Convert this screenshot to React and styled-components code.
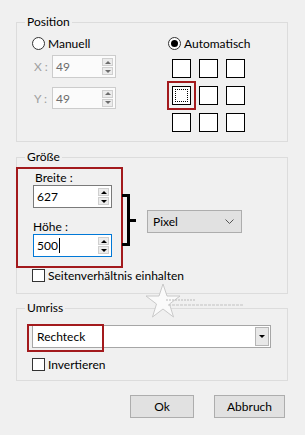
import React from 'react';
import styled, { createGlobalStyle } from 'styled-components';

const GlobalStyle = createGlobalStyle`
  body {
    margin: 0;
    background: #f0f0f0;
    font-family: 'Segoe UI', Lato, 'Noto Sans', sans-serif;
    font-size: 12px;
    color: #000;
  }
`;

const Page = styled.div`
  position: relative;
  width: 305px;
  height: 435px;
  box-sizing: border-box;
  padding: 14px 0 0 16px;
  background: #f0f0f0;
`;

const Group = styled.fieldset`
  margin: ${p => p.$mt || 0}px 0 0;
  padding: 0;
  width: 272px;
  min-width: 0;
  box-sizing: border-box;
  border: 1px solid #dcdcdc;
`;

const Legend = styled.legend`
  margin-left: 8px;
  padding: 0 2px;
  font-size: 12px;
  line-height: 16px;
`;

const PositionBody = styled.div`
  display: grid;
  grid-template-columns: 136px 1fr;
  padding: 7px 0 9px 15px;
`;

const Column = styled.div`
  display: flex;
  flex-direction: column;
`;

const OptionRow = styled.label`
  display: flex;
  align-items: center;
  gap: 3px;
  height: 13px;
  line-height: 13px;
  margin-top: ${p => p.$mt || 0}px;
  margin-left: ${p => p.$ml || 0}px;
`;

const Radio = styled.span`
  width: 13px;
  height: 13px;
  box-sizing: border-box;
  border: 1px solid #333;
  border-radius: 50%;
  background: #fff;
  display: flex;
  align-items: center;
  justify-content: center;
  &::after {
    content: '';
    display: ${p => (p.$checked ? 'block' : 'none')};
    width: 7px;
    height: 7px;
    border-radius: 50%;
    background: #000;
  }
`;

const Check = styled.span`
  width: 13px;
  height: 13px;
  box-sizing: border-box;
  border: 1px solid #333;
  background: #fff;
`;

const SpinRow = styled.div`
  display: flex;
  align-items: center;
  margin-top: ${p => p.$mt || 0}px;
`;

const AxisLabel = styled.span`
  width: 20px;
  padding-left: 2px;
  box-sizing: border-box;
  color: #a0a0a0;
`;

const Spin = styled.div`
  display: flex;
  align-items: center;
  width: ${p => p.$w}px;
  height: ${p => p.$h}px;
  box-sizing: border-box;
  border: 1px solid ${p => p.$border};
  background: ${p => (p.$disabled ? '#fbfbfb' : '#fff')};
  padding: 0 2px 0 3px;
`;

const SpinValue = styled.span`
  flex: 1;
  display: flex;
  align-items: center;
  color: ${p => (p.$disabled ? '#6d6d6d' : '#000')};
`;

const Caret = styled.span`
  width: 1px;
  height: 15px;
  background: #000;
  margin-left: 1px;
`;

const SpinButtons = styled.div`
  display: flex;
  flex-direction: column;
  gap: 1px;
`;

const SpinButton = styled.span`
  width: 11px;
  height: 8px;
  box-sizing: border-box;
  border: 1px solid #cfcfcf;
  background: #ececec;
  display: flex;
  align-items: center;
  justify-content: center;
  &::after {
    content: '';
    border-left: 3px solid transparent;
    border-right: 3px solid transparent;
    ${p =>
      p.$up
        ? `border-bottom: 3px solid ${p.$disabled ? '#6d6d6d' : '#000'};`
        : `border-top: 3px solid ${p.$disabled ? '#6d6d6d' : '#000'};`}
  }
`;

const Anchors = styled.div`
  display: grid;
  grid-template-columns: repeat(3, 19px);
  grid-auto-rows: 19px;
  gap: 8px;
  margin: 9px 0 0 4px;
`;

const Anchor = styled.span`
  box-sizing: border-box;
  border: 1px solid #000;
  background: #fff;
  outline: ${p => (p.$marked ? '2px solid #a31a1d' : 'none')};
  outline-offset: 3px;
  padding: 2px;
  &::after {
    content: '';
    display: ${p => (p.$marked ? 'block' : 'none')};
    width: 100%;
    height: 100%;
    box-sizing: border-box;
    border: 1px dotted #000;
  }
`;

const SizeBody = styled.div`
  padding: 2px 0 11px 0;
`;

const SizeRow = styled.div`
  display: flex;
  align-items: flex-start;
  margin-left: -1px;
`;

const RedBox = styled.div`
  width: 107px;
  height: 101px;
  box-sizing: border-box;
  border: 2px solid #a31a1d;
  padding: 1px 0 0 15px;
`;

const FieldLabel = styled.div`
  line-height: 15px;
  height: 15px;
  margin-top: ${p => p.$mt || 0}px;
  padding-left: ${p => p.$pl || 0}px;
`;

const Bracket = styled.div`
  display: flex;
  align-items: center;
  margin: 27px 0 0 -1px;
`;

const BracketArms = styled.div`
  width: 8px;
  height: 52px;
  box-sizing: border-box;
  border: 3px solid #000;
  border-left: none;
`;

const BracketTick = styled.div`
  width: 6px;
  height: 3px;
  background: #000;
`;

const Select = styled.div`
  display: flex;
  align-items: center;
  justify-content: space-between;
  width: 95px;
  height: 23px;
  box-sizing: border-box;
  margin: 43px 0 0 11px;
  padding: 0 7px 0 5px;
  background: #e1e1e1;
  border: 1px solid #adadad;
`;

const OptionText = styled.span`
  line-height: 13px;
`;

const OutlineBody = styled.div`
  padding: 9px 0 9px 15px;
`;

const Combo = styled.div`
  position: relative;
  display: flex;
  align-items: center;
  justify-content: space-between;
  width: 239px;
  height: 23px;
  box-sizing: border-box;
  border: 1px solid #a6a6a6;
  background: #fff;
  padding: 0 1px 0 4px;
`;

const ComboButton = styled.span`
  width: 14px;
  height: 19px;
  box-sizing: border-box;
  border: 1px solid #b5b5b5;
  background: #e8e8e8;
  display: flex;
  align-items: center;
  justify-content: center;
  &::after {
    content: '';
    border-left: 3px solid transparent;
    border-right: 3px solid transparent;
    border-top: 3px solid #000;
  }
`;

const Highlight = styled.span`
  position: absolute;
  left: -6px;
  top: -2px;
  width: 77px;
  height: 28px;
  box-sizing: border-box;
  border: 2px solid #a31a1d;
`;

const Actions = styled.div`
  display: flex;
  justify-content: flex-end;
  gap: 20px;
  width: 272px;
  box-sizing: border-box;
  padding-right: 3px;
  margin-top: 14px;
`;

const Button = styled.button`
  width: ${p => p.$w}px;
  height: 23px;
  padding: 0;
  font: inherit;
  color: #000;
  background: #e1e1e1;
  border: 1px solid #adadad;
`;

const Watermark = styled.svg`
  position: absolute;
  left: 146px;
  top: 283px;
  pointer-events: none;
`;

const SpinBox = ({ value, w, h, border, disabled, caret }) => (
  <Spin $w={w} $h={h} $border={border} $disabled={disabled}>
    <SpinValue $disabled={disabled}>
      {value}
      {caret && <Caret />}
    </SpinValue>
    <SpinButtons>
      <SpinButton $up $disabled={disabled} />
      <SpinButton $disabled={disabled} />
    </SpinButtons>
  </Spin>
);

export default function App() {
  return (
    <Page>
      <GlobalStyle />
      <Group>
        <Legend>Position</Legend>
        <PositionBody>
          <Column>
            <OptionRow>
              <Radio />
              <OptionText>Manuell</OptionText>
            </OptionRow>
            <SpinRow $mt={5}>
              <AxisLabel>X :</AxisLabel>
              <SpinBox value="49" w={64} h={23} border="#cccccc" disabled />
            </SpinRow>
            <SpinRow $mt={9}>
              <AxisLabel>Y :</AxisLabel>
              <SpinBox value="49" w={64} h={22} border="#cccccc" disabled />
            </SpinRow>
          </Column>
          <Column>
            <OptionRow>
              <Radio $checked />
              <OptionText>Automatisch</OptionText>
            </OptionRow>
            <Anchors>
              {Array.from({ length: 9 }, (_, i) => (
                <Anchor key={i} $marked={i === 3} />
              ))}
            </Anchors>
          </Column>
        </PositionBody>
      </Group>

      <Group $mt={7}>
        <Legend>Größe</Legend>
        <SizeBody>
          <SizeRow>
            <RedBox>
              <FieldLabel $pl={2}>Breite :</FieldLabel>
              <SpinBox value="627" w={79} h={23} border="#7a7a7a" />
              <FieldLabel $mt={11}>Höhe :</FieldLabel>
              <SpinBox value="500" w={79} h={23} border="#0078d7" caret />
            </RedBox>
            <Bracket>
              <BracketArms />
              <BracketTick />
            </Bracket>
            <Select>
              <span>Pixel</span>
              <svg width="9" height="5" viewBox="0 0 9 5">
                <path d="M0.5 0.5 L4.5 4.5 L8.5 0.5" fill="none" stroke="#555" strokeWidth="1" />
              </svg>
            </Select>
          </SizeRow>
          <OptionRow $mt={1} $ml={15}>
            <Check />
            <OptionText>Seitenverhältnis einhalten</OptionText>
          </OptionRow>
        </SizeBody>
      </Group>

      <Group $mt={6}>
        <Legend>Umriss</Legend>
        <OutlineBody>
          <Combo>
            <span>Rechteck</span>
            <ComboButton />
            <Highlight />
          </Combo>
          <OptionRow $mt={10}>
            <Check />
            <OptionText>Invertieren</OptionText>
          </OptionRow>
        </OutlineBody>
      </Group>

      <Actions>
        <Button $w={64}>Ok</Button>
        <Button $w={71}>Abbruch</Button>
      </Actions>

      <Watermark width="100" height="42" viewBox="0 0 100 42">
        <polygon
          points="17,1 21,13 34,13 23.5,21 27.5,34 17,26 6.5,34 10.5,21 0,13 13,13"
          fill="#fafafa"
          stroke="#c4c4c4"
          strokeWidth="0.9"
        />
        <line x1="20" y1="17" x2="50" y2="17" stroke="#bababa" strokeWidth="1" strokeDasharray="2 1" />
        <line x1="22" y1="22" x2="98" y2="22" stroke="#c2c2c2" strokeWidth="1" strokeDasharray="3 1" />
      </Watermark>
    </Page>
  );
}
